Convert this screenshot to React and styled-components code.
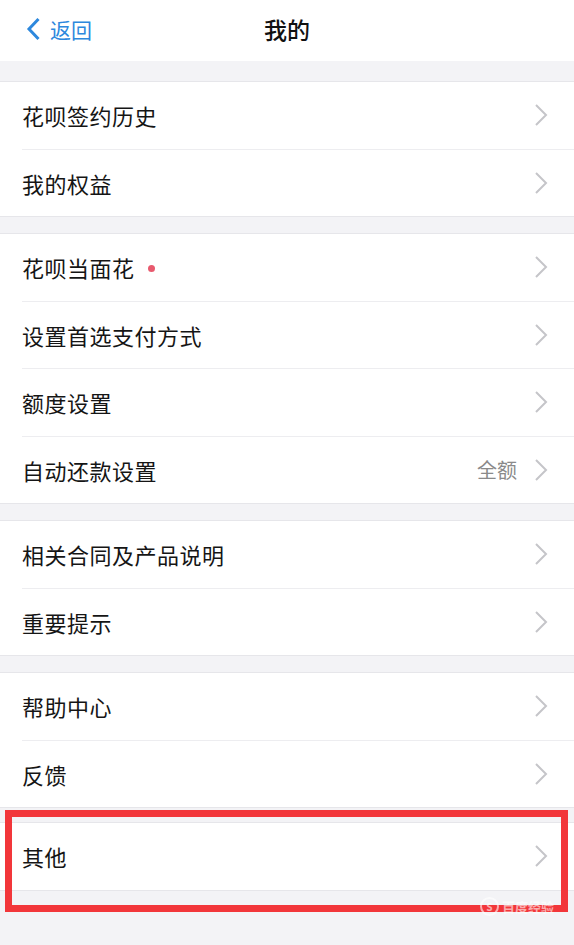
import React from "react";
import styled, { createGlobalStyle } from "styled-components";

const GlobalStyle = createGlobalStyle`
  html, body {
    margin: 0;
    padding: 0;
    background: #f3f3f6;
  }
  body {
    font-family: "Noto Sans CJK SC", "Noto Sans", sans-serif;
    -webkit-font-smoothing: antialiased;
  }
`;

const Page = styled.div`
  position: relative;
  width: 574px;
  min-height: 945px;
  background: #f3f3f6;
  overflow: hidden;
`;

const NavBar = styled.header`
  height: 58px;
  padding-bottom: 3px;
  background: #fff;
  display: grid;
  grid-template-columns: 1fr auto 1fr;
  align-items: center;
`;

const BackButton = styled.div`
  display: flex;
  align-items: center;
  gap: 9px;
  padding-left: 26px;
  color: #2d88dd;
  font-size: 21px;
  line-height: 1;
`;

const Title = styled.h1`
  margin: 0;
  font-size: 23px;
  font-weight: 500;
  color: #111;
`;

const Groups = styled.div`
  display: flex;
  flex-direction: column;
  padding-top: 20px;
`;

const Group = styled.section`
  margin-top: ${(p) => p.$gap}px;
  background: #fff;
  border-top: 1px solid #e6e6ea;
  border-bottom: 1px solid #e6e6ea;
  padding-left: 22px;
`;

const Row = styled.div`
  height: 66.5px;
  display: flex;
  align-items: center;
  padding-right: 26px;
  & + & {
    border-top: 1px solid #ededf0;
  }
`;

const Label = styled.span`
  font-size: 22px;
  color: #151515;
  letter-spacing: 0.5px;
  flex: 1;
  display: flex;
  align-items: center;
`;

const Dot = styled.i`
  width: 7px;
  height: 7px;
  border-radius: 50%;
  background: #e85a6e;
  margin-left: 13px;
  margin-top: 2px;
`;

const Value = styled.span`
  font-size: 20px;
  color: #8a8a8a;
  margin-right: 17px;
`;

const Highlight = styled.div`
  position: absolute;
  left: 5px;
  top: 810px;
  width: 549px;
  height: 88px;
  border: 7px solid #f2363a;
  pointer-events: none;
`;

const Watermark = styled.div`
  position: absolute;
  right: 20px;
  top: 897px;
  display: flex;
  align-items: center;
  gap: 3px;
  color: rgba(255, 255, 255, 0.6);
  font-size: 13px;
  font-weight: 700;
`;

const WaterCircle = styled.span`
  width: 15px;
  height: 15px;
  border-radius: 50%;
  border: 2px solid rgba(255, 255, 255, 0.6);
  font-size: 10px;
  display: flex;
  align-items: center;
  justify-content: center;
`;

const Chevron = () => (
  <svg width="14" height="24" viewBox="0 0 14 24">
    <path d="M2 2 L12 12 L2 22" fill="none" stroke="#c5c5c9" strokeWidth="2" />
  </svg>
);

const BackIcon = () => (
  <svg width="15" height="24" viewBox="0 0 15 24">
    <path d="M12.5 2 L3 12 L12.5 22" fill="none" stroke="#2d88dd" strokeWidth="3" />
  </svg>
);

const groups = [
  { gap: 0, items: [{ label: "花呗签约历史" }, { label: "我的权益" }] },
  {
    gap: 16,
    items: [
      { label: "花呗当面花", dot: true },
      { label: "设置首选支付方式" },
      { label: "额度设置" },
      { label: "自动还款设置", value: "全额" },
    ],
  },
  { gap: 16, items: [{ label: "相关合同及产品说明" }, { label: "重要提示" }] },
  { gap: 16, items: [{ label: "帮助中心" }, { label: "反馈" }] },
  { gap: 14, items: [{ label: "其他" }] },
];

export default function App() {
  return (
    <Page>
      <GlobalStyle />
      <NavBar>
        <BackButton>
          <BackIcon />
          <span>返回</span>
        </BackButton>
        <Title>我的</Title>
        <div />
      </NavBar>
      <Groups>
        {groups.map((group, gi) => (
          <Group key={gi} $gap={group.gap}>
            {group.items.map((item) => (
              <Row key={item.label}>
                <Label>
                  {item.label}
                  {item.dot && <Dot />}
                </Label>
                {item.value && <Value>{item.value}</Value>}
                <Chevron />
              </Row>
            ))}
          </Group>
        ))}
      </Groups>
      <Highlight />
      <Watermark>
        <WaterCircle>S</WaterCircle>
        <span>百度经验</span>
      </Watermark>
    </Page>
  );
}
